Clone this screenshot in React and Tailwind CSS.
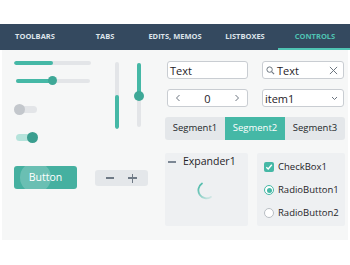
import React from 'react';

const TEAL = 'bg-[#45b8a6]';

const tabs = ['Toolbars', 'Tabs', 'Edits, Memos', 'Listboxes', 'Controls'];

function NavBar() {
  return (
    <div className="flex h-[26px] bg-[#34495f]">
      {tabs.map((t, i) => {
        const active = i === tabs.length - 1;
        return (
          <div
            key={t}
            className={
              active
                ? 'relative flex w-[70px] items-center justify-center text-[7.5px] font-bold uppercase text-[#4fc3b3]'
                : 'relative flex w-[70px] items-center justify-center text-[7.5px] font-bold uppercase text-[#dde4ea]'
            }
          >
            {t}
            {active && <div className="absolute bottom-0 left-[-2px] right-0 h-[2px] bg-[#4fc3b3]" />}
          </div>
        );
      })}
    </div>
  );
}

function SliderColumn() {
  return (
    <div className="ml-[12px] flex w-[80px] flex-col">
      {/* plain progress slider */}
      <div className="flex h-[4px] w-[77px] overflow-hidden rounded-full bg-[#e3e5e8]">
        <div className={`h-full w-[39px] rounded-full ${TEAL}`} />
      </div>
      {/* slider with thumb */}
      <div className="relative ml-[2px] mt-[11px] flex h-[9px] w-[74px] items-center">
        <div className="h-[4px] w-full rounded-full bg-[#e3e5e8]" />
        <div className={`absolute left-0 h-[4px] w-[36px] rounded-full ${TEAL}`} />
        <div className="absolute left-[32px] h-[9px] w-[9px] rounded-full bg-[#3ea897]" />
      </div>
      {/* toggle off */}
      <div className="relative mt-[19px] flex h-[11px] w-[24px] items-center">
        <div className="ml-[2px] h-[7px] w-[21px] rounded-full bg-[#e3e5e8]" />
        <div className="absolute left-0 h-[11px] w-[11px] rounded-full bg-[#c3c7cc]" />
      </div>
      {/* toggle on */}
      <div className="relative ml-[2px] mt-[17px] flex h-[11px] w-[24px] items-center">
        <div className="h-[7px] w-[21px] rounded-full bg-[#b5e3db]" />
        <div className="absolute left-[11px] h-[11px] w-[11px] rounded-full bg-[#3a9e8f]" />
      </div>
    </div>
  );
}

function VerticalSliders() {
  return (
    <div className="flex items-start">
      <div className="ml-[21px] mt-[1px] flex h-[67px] w-[4px] flex-col justify-end overflow-hidden rounded-full bg-[#e3e5e8]">
        <div className={`h-[34px] w-full rounded-full ${TEAL}`} />
      </div>
      <div className="relative ml-[15px] mt-[2px] flex h-[64px] w-[10px] justify-center">
        <div className="h-full w-[4px] rounded-full bg-[#e3e5e8]" />
        <div className={`absolute top-0 h-[33px] w-[4px] rounded-full ${TEAL}`} />
        <div className="absolute top-[28px] h-[10px] w-[10px] rounded-full bg-[#3ea897]" />
      </div>
    </div>
  );
}

function Box({ className = '', children }) {
  return (
    <div
      className={`flex h-[18px] items-center rounded-[3px] border border-[#c9cdd2] bg-white text-[11px] leading-none text-[#1f2328] ${className}`}
    >
      {children}
    </div>
  );
}

function Inputs() {
  return (
    <div className="ml-[21px] flex w-[180px] flex-col">
      <div className="ml-[2px] flex gap-[14px]">
        <Box className="w-[81px] pl-[2px]">Text</Box>
        <Box className="w-[82px] pl-[3px]">
          <svg width="9" height="9" viewBox="0 0 10 10" className="mr-[2px]">
            <circle cx="4" cy="4" r="3" fill="none" stroke="#6c7580" strokeWidth="1.1" />
            <line x1="6.2" y1="6.2" x2="9" y2="9" stroke="#6c7580" strokeWidth="1.2" />
          </svg>
          <span>Text</span>
          <svg width="9" height="9" viewBox="0 0 10 10" className="ml-auto mr-[5px]">
            <path d="M1 1L9 9M9 1L1 9" stroke="#6c7580" strokeWidth="1.1" />
          </svg>
        </Box>
      </div>
      <div className="ml-[2px] mt-[10px] flex gap-[14px]">
        <Box className="w-[81px] justify-between px-[7px]">
          <svg width="6" height="8" viewBox="0 0 6 8">
            <path d="M4.5 1L1.5 4L4.5 7" fill="none" stroke="#6c7580" strokeWidth="1" />
          </svg>
          <span>0</span>
          <svg width="6" height="8" viewBox="0 0 6 8">
            <path d="M1.5 1L4.5 4L1.5 7" fill="none" stroke="#6c7580" strokeWidth="1" />
          </svg>
        </Box>
        <Box className="w-[82px] pl-[2px]">
          <span>item1</span>
          <svg width="7" height="5" viewBox="0 0 7 5" className="ml-auto mr-[5px]">
            <path d="M1 1L3.5 3.5L6 1" fill="none" stroke="#6c7580" strokeWidth="1" />
          </svg>
        </Box>
      </div>
      <div className="mt-[10px] flex h-[23px] w-[180px] overflow-hidden rounded-[3px] bg-[#e4e7ea] text-[9.5px] text-[#23272b]">
        <div className="flex w-[60px] items-center justify-center">Segment1</div>
        <div className={`flex w-[60px] items-center justify-center text-white ${TEAL}`}>Segment2</div>
        <div className="flex w-[60px] items-center justify-center">Segment3</div>
      </div>
    </div>
  );
}

function BottomRow() {
  return (
    <div className="mt-[10px] flex items-start">
      <div className="relative ml-[12px] mt-[13px] flex h-[23px] w-[63px] items-center justify-center overflow-hidden rounded-[3px] bg-[#45b0a0] text-[10.5px] text-white">
        <div className="absolute left-[6px] top-[-4px] h-[31px] w-[31px] rounded-full bg-white/20" />
        <span className="relative">Button</span>
      </div>
      <div className="ml-[18px] mt-[17px] flex h-[16px] w-[53px] items-center justify-around rounded-[3px] bg-[#e4e7ea] px-[4px]">
        <div className="h-[1.5px] w-[8px] bg-[#6f7a86]" />
        <div className="relative flex h-[9px] w-[9px] items-center justify-center">
          <div className="h-[1.5px] w-[9px] bg-[#6f7a86]" />
          <div className="absolute h-[9px] w-[1.5px] bg-[#6f7a86]" />
        </div>
      </div>
      <div className="ml-[17px] flex h-[73px] w-[83px] flex-col rounded-[2px] bg-[#eef0f2]">
        <div className="flex h-[15px] items-center pt-[2px] text-[10.5px] text-[#1f2328]">
          <div className="ml-[3px] h-[2px] w-[8px] bg-[#7c8794]" />
          <span className="ml-[7px]">Expander1</span>
        </div>
        <div className="flex flex-1 items-center justify-center pb-[14px]">
          <svg width="20" height="20" viewBox="0 0 20 20">
            <defs>
              <linearGradient id="spin" x1="0" y1="0" x2="1" y2="1">
                <stop offset="0" stopColor="#45b8a6" />
                <stop offset="1" stopColor="#45b8a6" stopOpacity="0.15" />
              </linearGradient>
            </defs>
            <path d="M5 3.5A8 8 0 0 0 14 17" fill="none" stroke="url(#spin)" strokeWidth="1.8" strokeLinecap="round" />
          </svg>
        </div>
      </div>
      <div className="ml-[9px] flex h-[73px] w-[88px] flex-col gap-[11px] rounded-[2px] bg-[#eef0f2] pl-[7px] pt-[8px] text-[9.5px] leading-[12px] text-[#1f2328]">
        <div className="flex items-center gap-[4px]">
          <div className="flex h-[10px] w-[10px] items-center justify-center rounded-[2px] bg-[#45b8a6]">
            <svg width="8" height="8" viewBox="0 0 8 8">
              <path d="M1.3 4.2L3.2 6L6.8 1.8" fill="none" stroke="white" strokeWidth="1.4" />
            </svg>
          </div>
          <span>CheckBox1</span>
        </div>
        <div className="flex items-center gap-[4px]">
          <div className="flex h-[10px] w-[10px] items-center justify-center rounded-full border border-[#45b8a6] bg-white">
            <div className="h-[5px] w-[5px] rounded-full bg-[#45b8a6]" />
          </div>
          <span>RadioButton1</span>
        </div>
        <div className="flex items-center gap-[4px]">
          <div className="h-[10px] w-[10px] rounded-full border border-[#b9bec4] bg-white" />
          <span>RadioButton2</span>
        </div>
      </div>
    </div>
  );
}

export default function App() {
  return (
    <div className="h-[265px] w-[350px] bg-white" style={{ fontFamily: '"Open Sans", "Noto Sans", sans-serif' }}>
      <div className="h-[24px]" />
      <NavBar />
      <div className="ml-[2px] h-[190px] w-[346px] bg-[#f6f7f7] pt-[11px]">
        <div className="flex h-[82px] items-start">
          <SliderColumn />
          <VerticalSliders />
          <Inputs />
        </div>
        <BottomRow />
      </div>
    </div>
  );
}
